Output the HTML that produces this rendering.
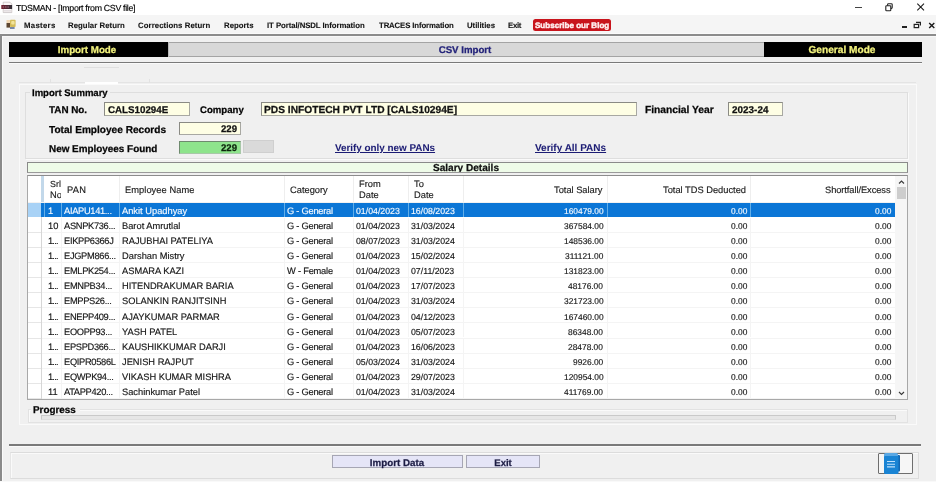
<!DOCTYPE html>
<html><head><meta charset="utf-8"><style>
html,body{margin:0;padding:0}
body{width:936px;height:482px;overflow:hidden;position:relative;background:#f0f0f0;font-family:"Liberation Sans",sans-serif}
.t{position:absolute;white-space:nowrap;line-height:1;font-family:"Liberation Sans",sans-serif;text-rendering:geometricPrecision}
.t[style*="bold"]{-webkit-text-stroke:0.25px currentColor}
.r{position:absolute}
.t{will-change:transform;-webkit-text-stroke:0.15px currentColor}
</style></head><body>
<div class="r" style="left:0px;top:0px;width:936.00px;height:15.00px;background:#ffffff"></div>
<div class="r" style="left:0px;top:15px;width:936.00px;height:18.00px;background:#f5f5f5"></div>
<div class="r" style="left:0px;top:33px;width:936.00px;height:1.00px;background:#fafafa"></div>
<div class="r" style="left:0px;top:34px;width:936.00px;height:2.00px;background:#8c8c8c"></div>
<div class="r" style="left:0px;top:36px;width:936.00px;height:1.00px;background:#f8f8f8"></div>
<div class="r" style="left:0px;top:36px;width:2.00px;height:446.00px;background:#8a8a8a"></div>
<div class="r" style="left:2px;top:36px;width:1.00px;height:446.00px;background:#fafafa"></div>
<svg class="r" style="left:0px;top:0px" width="15" height="15" viewBox="0 0 15 15"><defs><linearGradient id="ig" x1="0" x2="1" y1="0" y2="0"><stop offset="0" stop-color="#742030"/><stop offset="1" stop-color="#303038"/></linearGradient></defs><path d="M3.2 2.2 H10 L11.8 4 V12.6 H3.2 Z" fill="#fbf8f8" stroke="#b8b0b0" stroke-width="0.6"/><rect x="1.3" y="5" width="10.8" height="4" fill="url(#ig)"/><path d="M2.6 7 H4.2 M5 7 H6.6 M7.4 7 H9" stroke="#b88898" stroke-width="0.8"/><path d="M3.8 10.6 H11 M3.8 12 H11" stroke="#cfc8cc" stroke-width="0.6"/></svg>
<div class="t" style="left:16.00px;top:4.0px;font-size:8.8px;color:#000;letter-spacing:-0.319px;">TDSMAN - [Import from CSV file]</div>
<div class="r" style="left:855px;top:7px;width:7.00px;height:1.00px;background:#444"></div>
<svg class="r" style="left:884px;top:2px" width="10" height="10" viewBox="0 0 10 10"><rect x="1.8" y="3.8" width="5" height="5" rx="0.8" fill="none" stroke="#222" stroke-width="1.1"/><path d="M3.6 3.8 V2.6 Q3.6 1.8 4.4 1.8 H7.4 Q8.2 1.8 8.2 2.6 V5.6 Q8.2 6.4 7.4 6.4 H6.8" fill="none" stroke="#222" stroke-width="1.1"/></svg>
<svg class="r" style="left:916px;top:2px" width="10" height="10" viewBox="0 0 10 10"><path d="M1.3 1.6 L8 8.3 M8 1.6 L1.3 8.3" stroke="#1a1a1a" stroke-width="1.05"/></svg>
<svg class="r" style="left:6px;top:19px" width="11" height="11" viewBox="0 0 11 11"><rect x="0.5" y="1" width="3.6" height="3" fill="#f2d8b4"/><rect x="0.5" y="4" width="3.6" height="4.6" fill="#5e4630"/><rect x="4" y="0.7" width="5.6" height="7.3" rx="0.8" fill="#d4bc5a"/><rect x="5.2" y="2" width="3.4" height="3.6" rx="1" fill="#f2e49a"/><rect x="4" y="8" width="4.6" height="2" fill="#7888a8"/></svg>
<div class="t" style="left:24.00px;top:22.0px;font-size:7.8px;font-weight:bold;color:#141414;letter-spacing:0.303px;-webkit-text-stroke:0.1px currentColor;">Masters</div>
<div class="t" style="left:68.00px;top:22.0px;font-size:7.8px;font-weight:bold;color:#141414;letter-spacing:0.043px;-webkit-text-stroke:0.1px currentColor;">Regular Return</div>
<div class="t" style="left:138.20px;top:22.0px;font-size:7.8px;font-weight:bold;color:#141414;letter-spacing:0.066px;-webkit-text-stroke:0.1px currentColor;">Corrections Return</div>
<div class="t" style="left:223.90px;top:22.0px;font-size:7.8px;font-weight:bold;color:#141414;letter-spacing:0.005px;-webkit-text-stroke:0.1px currentColor;">Reports</div>
<div class="t" style="left:267.30px;top:22.0px;font-size:7.8px;font-weight:bold;color:#141414;letter-spacing:-0.073px;-webkit-text-stroke:0.1px currentColor;">IT Portal/NSDL Information</div>
<div class="t" style="left:378.50px;top:22.0px;font-size:7.8px;font-weight:bold;color:#141414;letter-spacing:-0.137px;-webkit-text-stroke:0.1px currentColor;">TRACES Information</div>
<div class="t" style="left:466.70px;top:22.0px;font-size:7.8px;font-weight:bold;color:#141414;letter-spacing:-0.022px;-webkit-text-stroke:0.1px currentColor;">Utilities</div>
<div class="t" style="left:508.00px;top:22.0px;font-size:7.8px;font-weight:bold;color:#141414;letter-spacing:-0.302px;-webkit-text-stroke:0.1px currentColor;">Exit</div>
<div class="r" style="left:532.8px;top:19.3px;width:78.00px;height:11.30px;background:#c8141c;border-radius:2.5px"></div>
<div class="t" style="left:535.00px;top:22.0px;font-size:8.0px;font-weight:bold;color:#fff0f0;letter-spacing:0.024px;-webkit-text-stroke:0.45px #fff0f0;">Subscribe our Blog</div>
<div class="r" style="left:901.5px;top:26.2px;width:5.00px;height:1.40px;background:#222"></div>
<svg class="r" style="left:913px;top:21px" width="9" height="8" viewBox="0 0 9 8"><rect x="1.2" y="3.4" width="4.4" height="3.2" fill="none" stroke="#222" stroke-width="1.2"/><path d="M3 1.4 H7.4 V4.6" fill="none" stroke="#222" stroke-width="1.2"/></svg>
<svg class="r" style="left:927.5px;top:21.5px" width="8" height="7" viewBox="0 0 8 7"><path d="M1.2 1 L6.3 6 M6.3 1 L1.2 6" stroke="#1a1a1a" stroke-width="1.4"/></svg>
<div class="r" style="left:168px;top:42px;width:596.00px;height:15.00px;background:#d8d8d8;border-top:1px solid #a4a4a4;border-bottom:1px solid #a4a4a4;box-sizing:border-box"></div>
<div class="r" style="left:168px;top:42px;width:1.00px;height:15.00px;background:#b8b8b8"></div>
<div class="r" style="left:9px;top:42px;width:159.00px;height:15.00px;background:#000"></div>
<div class="r" style="left:763.5px;top:42px;width:158.50px;height:15.00px;background:#000"></div>
<div class="t" style="left:-212.55px;width:600px;text-align:center;top:46.0px;font-size:9.75px;font-weight:bold;color:#f2f27c;letter-spacing:0.000px;">Import Mode</div>
<div class="t" style="left:165.00px;width:600px;text-align:center;top:46.0px;font-size:9.7px;font-weight:bold;color:#24247a;letter-spacing:-0.013px;">CSV Import</div>
<div class="t" style="left:542.20px;width:600px;text-align:center;top:46.0px;font-size:10.1px;font-weight:bold;color:#f2f27c;letter-spacing:0.019px;">General Mode</div>
<div class="r" style="left:9px;top:61.5px;width:913.00px;height:1.50px;background:#7a7a7a"></div>
<div class="r" style="left:9px;top:63px;width:913.00px;height:1.00px;background:#fafafa"></div>
<div class="r" style="left:84px;top:67px;width:35.00px;height:1.00px;background:#e0e0e0"></div>
<div class="r" style="left:19px;top:82px;width:897.00px;height:1.00px;background:#e4e4e4"></div>
<div class="r" style="left:85px;top:82px;width:33.00px;height:1.50px;background:#ffffff"></div>
<div class="r" style="left:50px;top:79px;width:1.00px;height:4.00px;background:#e2e2e2"></div>
<div class="r" style="left:149px;top:79px;width:1.00px;height:4.00px;background:#e2e2e2"></div>
<div class="r" style="left:19px;top:83.5px;width:897.50px;height:341.50px;border:1px solid #fafafa;box-sizing:border-box"></div>
<div class="r" style="left:25px;top:92px;width:883.00px;height:66.50px;border:1px solid #dedede;box-shadow:1px 1px 0 #fafafa;box-sizing:border-box"></div>
<div class="r" style="left:30px;top:86px;width:80.00px;height:13.00px;background:#f0f0f0"></div>
<div class="t" style="left:32.00px;top:89.0px;font-size:9.55px;font-weight:bold;color:#050505;letter-spacing:-0.014px;">Import Summary</div>
<div class="t" style="left:49.40px;top:106.0px;font-size:9.85px;font-weight:bold;color:#050505;letter-spacing:-0.003px;">TAN No.</div>
<div class="r" style="left:104px;top:102px;width:86.00px;height:14.00px;background:#fefee4;border:1px solid #8a8a84;border-right-color:#a8a8a2;border-bottom-color:#a8a8a2;box-sizing:border-box"></div>
<div class="t" style="left:107.70px;top:106.0px;font-size:9.75px;font-weight:bold;color:#111;letter-spacing:0.005px;">CALS10294E</div>
<div class="t" style="left:200.00px;top:106.0px;font-size:9.6px;font-weight:bold;color:#050505;letter-spacing:0.010px;">Company</div>
<div class="r" style="left:261px;top:102px;width:376.00px;height:14.00px;background:#fefee4;border:1px solid #8a8a84;border-right-color:#a8a8a2;border-bottom-color:#a8a8a2;box-sizing:border-box"></div>
<div class="t" style="left:264.00px;top:106.0px;font-size:10.2px;font-weight:bold;color:#111;letter-spacing:0.007px;">PDS INFOTECH PVT LTD [CALS10294E]</div>
<div class="t" style="left:645.10px;top:106.0px;font-size:10.25px;font-weight:bold;color:#050505;letter-spacing:-0.004px;">Financial Year</div>
<div class="r" style="left:728.4px;top:102.4px;width:54.80px;height:13.40px;background:#fefee4;border:1px solid #8a8a84;border-right-color:#a8a8a2;border-bottom-color:#a8a8a2;box-sizing:border-box"></div>
<div class="t" style="left:731.50px;top:106.0px;font-size:9.85px;font-weight:bold;color:#111;letter-spacing:0.042px;">2023-24</div>
<div class="t" style="left:49.40px;top:126.0px;font-size:10.1px;font-weight:bold;color:#050505;letter-spacing:-0.001px;">Total Employee Records</div>
<div class="r" style="left:178.5px;top:122.3px;width:62.30px;height:12.70px;background:#fefee4;border:1px solid #8a8a84;border-right-color:#a8a8a2;border-bottom-color:#a8a8a2;box-sizing:border-box"></div>
<div class="t" style="right:699.00px;top:125.0px;font-size:9.6px;font-weight:bold;color:#111;">229</div>
<div class="t" style="left:48.70px;top:145.0px;font-size:9.9px;font-weight:bold;color:#050505;letter-spacing:0.013px;">New Employees Found</div>
<div class="r" style="left:178.5px;top:140.6px;width:62.30px;height:13.20px;background:#8ee48c;border:1px solid #6e8a6e;border-right-color:#a8c8a8;border-bottom-color:#a8c8a8;box-sizing:border-box"></div>
<div class="t" style="right:699.00px;top:144.0px;font-size:9.6px;font-weight:bold;color:#0c240c;">229</div>
<div class="r" style="left:243.3px;top:140.4px;width:30.50px;height:12.40px;background:#dadada;border:1px solid #cfcfcf;box-sizing:border-box"></div>
<div class="t" style="left:334.60px;top:144.0px;font-size:9.9px;font-weight:bold;color:#1c1c74;letter-spacing:-0.010px;text-decoration:underline;-webkit-text-stroke:0.05px currentColor;">Verify only new PANs</div>
<div class="t" style="left:535.40px;top:144.0px;font-size:10.0px;font-weight:bold;color:#1c1c74;letter-spacing:-0.003px;text-decoration:underline;-webkit-text-stroke:0.05px currentColor;">Verify All PANs</div>
<div class="r" style="left:27px;top:162px;width:881.00px;height:11.00px;background:#eefbe8;border:1px solid #8a8a8a;border-bottom-color:#9a9a9a;box-sizing:border-box"></div>
<div class="r" style="left:28px;top:163px;width:879px;height:9px;overflow:hidden"><div class="t" style="left:138.00px;width:600px;text-align:center;top:1.0px;font-size:10.05px;font-weight:bold;color:#111;letter-spacing:0.006px;">Salary Details</div></div>
<div class="r" style="left:27px;top:174.6px;width:881.00px;height:225.40px;background:#fff;border:1px solid #a8a8a8;border-top:1.5px solid #8c8c8c;box-sizing:border-box"></div>
<div class="r" style="left:41px;top:176px;width:3.30px;height:27.00px;background:#c2d8ea"></div>
<div class="r" style="left:118.8px;top:176px;width:1.00px;height:26.00px;background:#eeeeee"></div>
<div class="r" style="left:283.9px;top:176px;width:1.00px;height:26.00px;background:#eeeeee"></div>
<div class="r" style="left:352.8px;top:176px;width:1.00px;height:26.00px;background:#eeeeee"></div>
<div class="r" style="left:408.0px;top:176px;width:1.00px;height:26.00px;background:#eeeeee"></div>
<div class="r" style="left:462.9px;top:176px;width:1.00px;height:26.00px;background:#eeeeee"></div>
<div class="r" style="left:606.9px;top:176px;width:1.00px;height:26.00px;background:#eeeeee"></div>
<div class="r" style="left:749.8px;top:176px;width:1.00px;height:26.00px;background:#eeeeee"></div>
<div class="r" style="left:28px;top:202px;width:867.00px;height:1.00px;background:#f2f2f2"></div>
<div class="r" style="left:49.6px;top:176px;width:11px;height:26px;overflow:hidden"><div class="t" style="left:0.00px;top:4.0px;font-size:8.9px;color:#202020;">Srl</div><div class="t" style="left:0.00px;top:15.0px;font-size:9.3px;color:#202020;">No</div></div>
<div class="t" style="left:66.70px;top:186.0px;font-size:9.3px;color:#202020;letter-spacing:0.284px;">PAN</div>
<div class="t" style="left:125.00px;top:186.0px;font-size:9.3px;color:#202020;letter-spacing:0.054px;">Employee Name</div>
<div class="t" style="left:289.90px;top:186.0px;font-size:9.3px;color:#202020;">Category</div>
<div class="t" style="left:358.70px;top:180.0px;font-size:9.3px;color:#202020;">From</div>
<div class="t" style="left:358.70px;top:191.0px;font-size:9.3px;color:#202020;">Date</div>
<div class="t" style="left:413.60px;top:180.0px;font-size:9.3px;color:#202020;">To</div>
<div class="t" style="left:413.60px;top:191.0px;font-size:9.3px;color:#202020;">Date</div>
<div class="t" style="right:333.61px;top:186.0px;font-size:9.3px;color:#202020;letter-spacing:-0.008px;">Total Salary</div>
<div class="t" style="right:189.80px;top:186.0px;font-size:9.3px;color:#202020;">Total TDS Deducted</div>
<div class="t" style="right:45.77px;top:186.0px;font-size:9.3px;color:#202020;letter-spacing:-0.072px;">Shortfall/Excess</div>
<div class="r" style="left:28px;top:202.6px;width:13.00px;height:14.60px;background:#a8d2f6"></div>
<div class="r" style="left:41px;top:202.6px;width:854.00px;height:14.60px;background:#0b76d6"></div>
<div class="r" style="left:44.2px;top:202.6px;width:1.00px;height:14.60px;background:#62aee8"></div>
<div class="r" style="left:60.8px;top:202.6px;width:1.00px;height:14.60px;background:#62aee8"></div>
<div class="r" style="left:118.8px;top:202.6px;width:1.00px;height:14.60px;background:#62aee8"></div>
<div class="r" style="left:283.9px;top:202.6px;width:1.00px;height:14.60px;background:#62aee8"></div>
<div class="r" style="left:352.8px;top:202.6px;width:1.00px;height:14.60px;background:#62aee8"></div>
<div class="r" style="left:408.0px;top:202.6px;width:1.00px;height:14.60px;background:#62aee8"></div>
<div class="r" style="left:462.9px;top:202.6px;width:1.00px;height:14.60px;background:#62aee8"></div>
<div class="r" style="left:606.9px;top:202.6px;width:1.00px;height:14.60px;background:#62aee8"></div>
<div class="r" style="left:749.8px;top:202.6px;width:1.00px;height:14.60px;background:#62aee8"></div>
<div class="t" style="left:47.80px;top:207.0px;font-size:9.3px;color:#f4f9ff;">1</div>
<div class="t" style="left:64.10px;top:207.0px;font-size:9.3px;color:#f4f9ff;letter-spacing:-0.32px;">AIAPU141...</div>
<div class="t" style="left:121.60px;top:207.0px;font-size:9.3px;color:#f4f9ff;">Ankit Upadhyay</div>
<div class="t" style="left:287.40px;top:207.0px;font-size:9.3px;color:#f4f9ff;letter-spacing:-0.248px;">G - General</div>
<div class="t" style="left:355.50px;top:207.0px;font-size:8.75px;color:#f4f9ff;">01/04/2023</div>
<div class="t" style="left:411.00px;top:207.0px;font-size:8.75px;color:#f4f9ff;">16/08/2023</div>
<div class="t" style="right:332.80px;top:207.0px;font-size:8.4px;color:#f4f9ff;">160479.00</div>
<div class="t" style="right:189.20px;top:207.0px;font-size:8.4px;color:#f4f9ff;">0.00</div>
<div class="t" style="right:44.70px;top:207.0px;font-size:8.4px;color:#f4f9ff;">0.00</div>
<div class="r" style="left:60.8px;top:217.7px;width:1.00px;height:14.10px;background:#f4f4f4"></div>
<div class="r" style="left:118.8px;top:217.7px;width:1.00px;height:14.10px;background:#f4f4f4"></div>
<div class="r" style="left:283.9px;top:217.7px;width:1.00px;height:14.10px;background:#f4f4f4"></div>
<div class="r" style="left:352.8px;top:217.7px;width:1.00px;height:14.10px;background:#f4f4f4"></div>
<div class="r" style="left:408.0px;top:217.7px;width:1.00px;height:14.10px;background:#f4f4f4"></div>
<div class="r" style="left:462.9px;top:217.7px;width:1.00px;height:14.10px;background:#f4f4f4"></div>
<div class="r" style="left:606.9px;top:217.7px;width:1.00px;height:14.10px;background:#f4f4f4"></div>
<div class="r" style="left:749.8px;top:217.7px;width:1.00px;height:14.10px;background:#f4f4f4"></div>
<div class="r" style="left:41px;top:231.79999999999998px;width:854.00px;height:1.00px;background:#f4f4f4"></div>
<div class="r" style="left:28px;top:231.79999999999998px;width:13.00px;height:1.00px;background:#e6e6e6"></div>
<div class="t" style="left:47.80px;top:222.0px;font-size:9.3px;color:#161616;">10</div>
<div class="t" style="left:64.10px;top:222.0px;font-size:9.3px;color:#161616;letter-spacing:-0.32px;">ASNPK736...</div>
<div class="t" style="left:121.60px;top:222.0px;font-size:9.3px;color:#161616;">Barot Amrutlal</div>
<div class="t" style="left:287.40px;top:222.0px;font-size:9.3px;color:#161616;letter-spacing:-0.248px;">G - General</div>
<div class="t" style="left:355.50px;top:222.0px;font-size:8.75px;color:#161616;">01/04/2023</div>
<div class="t" style="left:411.00px;top:222.0px;font-size:8.75px;color:#161616;">31/03/2024</div>
<div class="t" style="right:332.80px;top:222.0px;font-size:8.4px;color:#161616;">367584.00</div>
<div class="t" style="right:189.20px;top:222.0px;font-size:8.4px;color:#161616;">0.00</div>
<div class="t" style="right:44.70px;top:222.0px;font-size:8.4px;color:#161616;">0.00</div>
<div class="r" style="left:60.8px;top:232.79999999999998px;width:1.00px;height:14.10px;background:#f4f4f4"></div>
<div class="r" style="left:118.8px;top:232.79999999999998px;width:1.00px;height:14.10px;background:#f4f4f4"></div>
<div class="r" style="left:283.9px;top:232.79999999999998px;width:1.00px;height:14.10px;background:#f4f4f4"></div>
<div class="r" style="left:352.8px;top:232.79999999999998px;width:1.00px;height:14.10px;background:#f4f4f4"></div>
<div class="r" style="left:408.0px;top:232.79999999999998px;width:1.00px;height:14.10px;background:#f4f4f4"></div>
<div class="r" style="left:462.9px;top:232.79999999999998px;width:1.00px;height:14.10px;background:#f4f4f4"></div>
<div class="r" style="left:606.9px;top:232.79999999999998px;width:1.00px;height:14.10px;background:#f4f4f4"></div>
<div class="r" style="left:749.8px;top:232.79999999999998px;width:1.00px;height:14.10px;background:#f4f4f4"></div>
<div class="r" style="left:41px;top:246.89999999999998px;width:854.00px;height:1.00px;background:#f4f4f4"></div>
<div class="r" style="left:28px;top:246.89999999999998px;width:13.00px;height:1.00px;background:#e6e6e6"></div>
<div class="t" style="left:47.80px;top:237.0px;font-size:9.3px;color:#161616;letter-spacing:-0.808px;">1...</div>
<div class="t" style="left:64.10px;top:237.0px;font-size:9.3px;color:#161616;letter-spacing:-0.32px;">EIKPP6366J</div>
<div class="t" style="left:121.60px;top:237.0px;font-size:9.3px;color:#161616;">RAJUBHAI PATELIYA</div>
<div class="t" style="left:287.40px;top:237.0px;font-size:9.3px;color:#161616;letter-spacing:-0.248px;">G - General</div>
<div class="t" style="left:355.50px;top:237.0px;font-size:8.75px;color:#161616;">08/07/2023</div>
<div class="t" style="left:411.00px;top:237.0px;font-size:8.75px;color:#161616;">31/03/2024</div>
<div class="t" style="right:332.80px;top:237.0px;font-size:8.4px;color:#161616;">148536.00</div>
<div class="t" style="right:189.20px;top:237.0px;font-size:8.4px;color:#161616;">0.00</div>
<div class="t" style="right:44.70px;top:237.0px;font-size:8.4px;color:#161616;">0.00</div>
<div class="r" style="left:60.8px;top:247.89999999999998px;width:1.00px;height:14.10px;background:#f4f4f4"></div>
<div class="r" style="left:118.8px;top:247.89999999999998px;width:1.00px;height:14.10px;background:#f4f4f4"></div>
<div class="r" style="left:283.9px;top:247.89999999999998px;width:1.00px;height:14.10px;background:#f4f4f4"></div>
<div class="r" style="left:352.8px;top:247.89999999999998px;width:1.00px;height:14.10px;background:#f4f4f4"></div>
<div class="r" style="left:408.0px;top:247.89999999999998px;width:1.00px;height:14.10px;background:#f4f4f4"></div>
<div class="r" style="left:462.9px;top:247.89999999999998px;width:1.00px;height:14.10px;background:#f4f4f4"></div>
<div class="r" style="left:606.9px;top:247.89999999999998px;width:1.00px;height:14.10px;background:#f4f4f4"></div>
<div class="r" style="left:749.8px;top:247.89999999999998px;width:1.00px;height:14.10px;background:#f4f4f4"></div>
<div class="r" style="left:41px;top:262.0px;width:854.00px;height:1.00px;background:#f4f4f4"></div>
<div class="r" style="left:28px;top:262.0px;width:13.00px;height:1.00px;background:#e6e6e6"></div>
<div class="t" style="left:47.80px;top:252.0px;font-size:9.3px;color:#161616;letter-spacing:-0.808px;">1...</div>
<div class="t" style="left:64.10px;top:252.0px;font-size:9.3px;color:#161616;letter-spacing:-0.32px;">EJGPM866...</div>
<div class="t" style="left:121.60px;top:252.0px;font-size:9.3px;color:#161616;">Darshan Mistry</div>
<div class="t" style="left:287.40px;top:252.0px;font-size:9.3px;color:#161616;letter-spacing:-0.248px;">G - General</div>
<div class="t" style="left:355.50px;top:252.0px;font-size:8.75px;color:#161616;">01/04/2023</div>
<div class="t" style="left:411.00px;top:252.0px;font-size:8.75px;color:#161616;">15/02/2024</div>
<div class="t" style="right:332.80px;top:252.0px;font-size:8.4px;color:#161616;">311121.00</div>
<div class="t" style="right:189.20px;top:252.0px;font-size:8.4px;color:#161616;">0.00</div>
<div class="t" style="right:44.70px;top:252.0px;font-size:8.4px;color:#161616;">0.00</div>
<div class="r" style="left:60.8px;top:263.0px;width:1.00px;height:14.10px;background:#f4f4f4"></div>
<div class="r" style="left:118.8px;top:263.0px;width:1.00px;height:14.10px;background:#f4f4f4"></div>
<div class="r" style="left:283.9px;top:263.0px;width:1.00px;height:14.10px;background:#f4f4f4"></div>
<div class="r" style="left:352.8px;top:263.0px;width:1.00px;height:14.10px;background:#f4f4f4"></div>
<div class="r" style="left:408.0px;top:263.0px;width:1.00px;height:14.10px;background:#f4f4f4"></div>
<div class="r" style="left:462.9px;top:263.0px;width:1.00px;height:14.10px;background:#f4f4f4"></div>
<div class="r" style="left:606.9px;top:263.0px;width:1.00px;height:14.10px;background:#f4f4f4"></div>
<div class="r" style="left:749.8px;top:263.0px;width:1.00px;height:14.10px;background:#f4f4f4"></div>
<div class="r" style="left:41px;top:277.1px;width:854.00px;height:1.00px;background:#f4f4f4"></div>
<div class="r" style="left:28px;top:277.1px;width:13.00px;height:1.00px;background:#e6e6e6"></div>
<div class="t" style="left:47.80px;top:267.0px;font-size:9.3px;color:#161616;letter-spacing:-0.808px;">1...</div>
<div class="t" style="left:64.10px;top:267.0px;font-size:9.3px;color:#161616;letter-spacing:-0.32px;">EMLPK254...</div>
<div class="t" style="left:121.60px;top:267.0px;font-size:9.3px;color:#161616;">ASMARA KAZI</div>
<div class="t" style="left:287.40px;top:267.0px;font-size:9.3px;color:#161616;letter-spacing:-0.217px;">W - Female</div>
<div class="t" style="left:355.50px;top:267.0px;font-size:8.75px;color:#161616;">01/04/2023</div>
<div class="t" style="left:411.00px;top:267.0px;font-size:8.75px;color:#161616;">07/11/2023</div>
<div class="t" style="right:332.80px;top:267.0px;font-size:8.4px;color:#161616;">131823.00</div>
<div class="t" style="right:189.20px;top:267.0px;font-size:8.4px;color:#161616;">0.00</div>
<div class="t" style="right:44.70px;top:267.0px;font-size:8.4px;color:#161616;">0.00</div>
<div class="r" style="left:60.8px;top:278.1px;width:1.00px;height:14.10px;background:#f4f4f4"></div>
<div class="r" style="left:118.8px;top:278.1px;width:1.00px;height:14.10px;background:#f4f4f4"></div>
<div class="r" style="left:283.9px;top:278.1px;width:1.00px;height:14.10px;background:#f4f4f4"></div>
<div class="r" style="left:352.8px;top:278.1px;width:1.00px;height:14.10px;background:#f4f4f4"></div>
<div class="r" style="left:408.0px;top:278.1px;width:1.00px;height:14.10px;background:#f4f4f4"></div>
<div class="r" style="left:462.9px;top:278.1px;width:1.00px;height:14.10px;background:#f4f4f4"></div>
<div class="r" style="left:606.9px;top:278.1px;width:1.00px;height:14.10px;background:#f4f4f4"></div>
<div class="r" style="left:749.8px;top:278.1px;width:1.00px;height:14.10px;background:#f4f4f4"></div>
<div class="r" style="left:41px;top:292.20000000000005px;width:854.00px;height:1.00px;background:#f4f4f4"></div>
<div class="r" style="left:28px;top:292.20000000000005px;width:13.00px;height:1.00px;background:#e6e6e6"></div>
<div class="t" style="left:47.80px;top:282.0px;font-size:9.3px;color:#161616;letter-spacing:-0.808px;">1...</div>
<div class="t" style="left:64.10px;top:282.0px;font-size:9.3px;color:#161616;letter-spacing:-0.32px;">EMNPB34...</div>
<div class="t" style="left:121.60px;top:282.0px;font-size:9.3px;color:#161616;">HITENDRAKUMAR BARIA</div>
<div class="t" style="left:287.40px;top:282.0px;font-size:9.3px;color:#161616;letter-spacing:-0.248px;">G - General</div>
<div class="t" style="left:355.50px;top:282.0px;font-size:8.75px;color:#161616;">01/04/2023</div>
<div class="t" style="left:411.00px;top:282.0px;font-size:8.75px;color:#161616;">17/07/2023</div>
<div class="t" style="right:332.80px;top:282.0px;font-size:8.4px;color:#161616;">48176.00</div>
<div class="t" style="right:189.20px;top:282.0px;font-size:8.4px;color:#161616;">0.00</div>
<div class="t" style="right:44.70px;top:282.0px;font-size:8.4px;color:#161616;">0.00</div>
<div class="r" style="left:60.8px;top:293.2px;width:1.00px;height:14.10px;background:#f4f4f4"></div>
<div class="r" style="left:118.8px;top:293.2px;width:1.00px;height:14.10px;background:#f4f4f4"></div>
<div class="r" style="left:283.9px;top:293.2px;width:1.00px;height:14.10px;background:#f4f4f4"></div>
<div class="r" style="left:352.8px;top:293.2px;width:1.00px;height:14.10px;background:#f4f4f4"></div>
<div class="r" style="left:408.0px;top:293.2px;width:1.00px;height:14.10px;background:#f4f4f4"></div>
<div class="r" style="left:462.9px;top:293.2px;width:1.00px;height:14.10px;background:#f4f4f4"></div>
<div class="r" style="left:606.9px;top:293.2px;width:1.00px;height:14.10px;background:#f4f4f4"></div>
<div class="r" style="left:749.8px;top:293.2px;width:1.00px;height:14.10px;background:#f4f4f4"></div>
<div class="r" style="left:41px;top:307.3px;width:854.00px;height:1.00px;background:#f4f4f4"></div>
<div class="r" style="left:28px;top:307.3px;width:13.00px;height:1.00px;background:#e6e6e6"></div>
<div class="t" style="left:47.80px;top:297.0px;font-size:9.3px;color:#161616;letter-spacing:-0.808px;">1...</div>
<div class="t" style="left:64.10px;top:297.0px;font-size:9.3px;color:#161616;letter-spacing:-0.32px;">EMPPS26...</div>
<div class="t" style="left:121.60px;top:297.0px;font-size:9.3px;color:#161616;">SOLANKIN RANJITSINH</div>
<div class="t" style="left:287.40px;top:297.0px;font-size:9.3px;color:#161616;letter-spacing:-0.248px;">G - General</div>
<div class="t" style="left:355.50px;top:297.0px;font-size:8.75px;color:#161616;">01/04/2023</div>
<div class="t" style="left:411.00px;top:297.0px;font-size:8.75px;color:#161616;">31/03/2024</div>
<div class="t" style="right:332.80px;top:297.0px;font-size:8.4px;color:#161616;">321723.00</div>
<div class="t" style="right:189.20px;top:297.0px;font-size:8.4px;color:#161616;">0.00</div>
<div class="t" style="right:44.70px;top:297.0px;font-size:8.4px;color:#161616;">0.00</div>
<div class="r" style="left:60.8px;top:308.3px;width:1.00px;height:14.10px;background:#f4f4f4"></div>
<div class="r" style="left:118.8px;top:308.3px;width:1.00px;height:14.10px;background:#f4f4f4"></div>
<div class="r" style="left:283.9px;top:308.3px;width:1.00px;height:14.10px;background:#f4f4f4"></div>
<div class="r" style="left:352.8px;top:308.3px;width:1.00px;height:14.10px;background:#f4f4f4"></div>
<div class="r" style="left:408.0px;top:308.3px;width:1.00px;height:14.10px;background:#f4f4f4"></div>
<div class="r" style="left:462.9px;top:308.3px;width:1.00px;height:14.10px;background:#f4f4f4"></div>
<div class="r" style="left:606.9px;top:308.3px;width:1.00px;height:14.10px;background:#f4f4f4"></div>
<div class="r" style="left:749.8px;top:308.3px;width:1.00px;height:14.10px;background:#f4f4f4"></div>
<div class="r" style="left:41px;top:322.40000000000003px;width:854.00px;height:1.00px;background:#f4f4f4"></div>
<div class="r" style="left:28px;top:322.40000000000003px;width:13.00px;height:1.00px;background:#e6e6e6"></div>
<div class="t" style="left:47.80px;top:313.0px;font-size:9.3px;color:#161616;letter-spacing:-0.808px;">1...</div>
<div class="t" style="left:64.10px;top:313.0px;font-size:9.3px;color:#161616;letter-spacing:-0.32px;">ENEPP409...</div>
<div class="t" style="left:121.60px;top:313.0px;font-size:9.3px;color:#161616;">AJAYKUMAR PARMAR</div>
<div class="t" style="left:287.40px;top:313.0px;font-size:9.3px;color:#161616;letter-spacing:-0.248px;">G - General</div>
<div class="t" style="left:355.50px;top:313.0px;font-size:8.75px;color:#161616;">01/04/2023</div>
<div class="t" style="left:411.00px;top:313.0px;font-size:8.75px;color:#161616;">04/12/2023</div>
<div class="t" style="right:332.80px;top:313.0px;font-size:8.4px;color:#161616;">167460.00</div>
<div class="t" style="right:189.20px;top:313.0px;font-size:8.4px;color:#161616;">0.00</div>
<div class="t" style="right:44.70px;top:313.0px;font-size:8.4px;color:#161616;">0.00</div>
<div class="r" style="left:60.8px;top:323.4px;width:1.00px;height:14.10px;background:#f4f4f4"></div>
<div class="r" style="left:118.8px;top:323.4px;width:1.00px;height:14.10px;background:#f4f4f4"></div>
<div class="r" style="left:283.9px;top:323.4px;width:1.00px;height:14.10px;background:#f4f4f4"></div>
<div class="r" style="left:352.8px;top:323.4px;width:1.00px;height:14.10px;background:#f4f4f4"></div>
<div class="r" style="left:408.0px;top:323.4px;width:1.00px;height:14.10px;background:#f4f4f4"></div>
<div class="r" style="left:462.9px;top:323.4px;width:1.00px;height:14.10px;background:#f4f4f4"></div>
<div class="r" style="left:606.9px;top:323.4px;width:1.00px;height:14.10px;background:#f4f4f4"></div>
<div class="r" style="left:749.8px;top:323.4px;width:1.00px;height:14.10px;background:#f4f4f4"></div>
<div class="r" style="left:41px;top:337.5px;width:854.00px;height:1.00px;background:#f4f4f4"></div>
<div class="r" style="left:28px;top:337.5px;width:13.00px;height:1.00px;background:#e6e6e6"></div>
<div class="t" style="left:47.80px;top:328.0px;font-size:9.3px;color:#161616;letter-spacing:-0.808px;">1...</div>
<div class="t" style="left:64.10px;top:328.0px;font-size:9.3px;color:#161616;letter-spacing:-0.32px;">EOOPP93...</div>
<div class="t" style="left:121.60px;top:328.0px;font-size:9.3px;color:#161616;">YASH PATEL</div>
<div class="t" style="left:287.40px;top:328.0px;font-size:9.3px;color:#161616;letter-spacing:-0.248px;">G - General</div>
<div class="t" style="left:355.50px;top:328.0px;font-size:8.75px;color:#161616;">01/04/2023</div>
<div class="t" style="left:411.00px;top:328.0px;font-size:8.75px;color:#161616;">05/07/2023</div>
<div class="t" style="right:332.80px;top:328.0px;font-size:8.4px;color:#161616;">86348.00</div>
<div class="t" style="right:189.20px;top:328.0px;font-size:8.4px;color:#161616;">0.00</div>
<div class="t" style="right:44.70px;top:328.0px;font-size:8.4px;color:#161616;">0.00</div>
<div class="r" style="left:60.8px;top:338.5px;width:1.00px;height:14.10px;background:#f4f4f4"></div>
<div class="r" style="left:118.8px;top:338.5px;width:1.00px;height:14.10px;background:#f4f4f4"></div>
<div class="r" style="left:283.9px;top:338.5px;width:1.00px;height:14.10px;background:#f4f4f4"></div>
<div class="r" style="left:352.8px;top:338.5px;width:1.00px;height:14.10px;background:#f4f4f4"></div>
<div class="r" style="left:408.0px;top:338.5px;width:1.00px;height:14.10px;background:#f4f4f4"></div>
<div class="r" style="left:462.9px;top:338.5px;width:1.00px;height:14.10px;background:#f4f4f4"></div>
<div class="r" style="left:606.9px;top:338.5px;width:1.00px;height:14.10px;background:#f4f4f4"></div>
<div class="r" style="left:749.8px;top:338.5px;width:1.00px;height:14.10px;background:#f4f4f4"></div>
<div class="r" style="left:41px;top:352.6px;width:854.00px;height:1.00px;background:#f4f4f4"></div>
<div class="r" style="left:28px;top:352.6px;width:13.00px;height:1.00px;background:#e6e6e6"></div>
<div class="t" style="left:47.80px;top:343.0px;font-size:9.3px;color:#161616;letter-spacing:-0.808px;">1...</div>
<div class="t" style="left:64.10px;top:343.0px;font-size:9.3px;color:#161616;letter-spacing:-0.32px;">EPSPD366...</div>
<div class="t" style="left:121.60px;top:343.0px;font-size:9.3px;color:#161616;">KAUSHIKKUMAR DARJI</div>
<div class="t" style="left:287.40px;top:343.0px;font-size:9.3px;color:#161616;letter-spacing:-0.248px;">G - General</div>
<div class="t" style="left:355.50px;top:343.0px;font-size:8.75px;color:#161616;">01/04/2023</div>
<div class="t" style="left:411.00px;top:343.0px;font-size:8.75px;color:#161616;">16/06/2023</div>
<div class="t" style="right:332.80px;top:343.0px;font-size:8.4px;color:#161616;">28478.00</div>
<div class="t" style="right:189.20px;top:343.0px;font-size:8.4px;color:#161616;">0.00</div>
<div class="t" style="right:44.70px;top:343.0px;font-size:8.4px;color:#161616;">0.00</div>
<div class="r" style="left:60.8px;top:353.6px;width:1.00px;height:14.10px;background:#f4f4f4"></div>
<div class="r" style="left:118.8px;top:353.6px;width:1.00px;height:14.10px;background:#f4f4f4"></div>
<div class="r" style="left:283.9px;top:353.6px;width:1.00px;height:14.10px;background:#f4f4f4"></div>
<div class="r" style="left:352.8px;top:353.6px;width:1.00px;height:14.10px;background:#f4f4f4"></div>
<div class="r" style="left:408.0px;top:353.6px;width:1.00px;height:14.10px;background:#f4f4f4"></div>
<div class="r" style="left:462.9px;top:353.6px;width:1.00px;height:14.10px;background:#f4f4f4"></div>
<div class="r" style="left:606.9px;top:353.6px;width:1.00px;height:14.10px;background:#f4f4f4"></div>
<div class="r" style="left:749.8px;top:353.6px;width:1.00px;height:14.10px;background:#f4f4f4"></div>
<div class="r" style="left:41px;top:367.70000000000005px;width:854.00px;height:1.00px;background:#f4f4f4"></div>
<div class="r" style="left:28px;top:367.70000000000005px;width:13.00px;height:1.00px;background:#e6e6e6"></div>
<div class="t" style="left:47.80px;top:358.0px;font-size:9.3px;color:#161616;letter-spacing:-0.808px;">1...</div>
<div class="t" style="left:64.10px;top:358.0px;font-size:9.3px;color:#161616;letter-spacing:-0.32px;">EQIPR0586L</div>
<div class="t" style="left:121.60px;top:358.0px;font-size:9.3px;color:#161616;">JENISH RAJPUT</div>
<div class="t" style="left:287.40px;top:358.0px;font-size:9.3px;color:#161616;letter-spacing:-0.248px;">G - General</div>
<div class="t" style="left:355.50px;top:358.0px;font-size:8.75px;color:#161616;">05/03/2024</div>
<div class="t" style="left:411.00px;top:358.0px;font-size:8.75px;color:#161616;">31/03/2024</div>
<div class="t" style="right:332.80px;top:358.0px;font-size:8.4px;color:#161616;">9926.00</div>
<div class="t" style="right:189.20px;top:358.0px;font-size:8.4px;color:#161616;">0.00</div>
<div class="t" style="right:44.70px;top:358.0px;font-size:8.4px;color:#161616;">0.00</div>
<div class="r" style="left:60.8px;top:368.7px;width:1.00px;height:14.10px;background:#f4f4f4"></div>
<div class="r" style="left:118.8px;top:368.7px;width:1.00px;height:14.10px;background:#f4f4f4"></div>
<div class="r" style="left:283.9px;top:368.7px;width:1.00px;height:14.10px;background:#f4f4f4"></div>
<div class="r" style="left:352.8px;top:368.7px;width:1.00px;height:14.10px;background:#f4f4f4"></div>
<div class="r" style="left:408.0px;top:368.7px;width:1.00px;height:14.10px;background:#f4f4f4"></div>
<div class="r" style="left:462.9px;top:368.7px;width:1.00px;height:14.10px;background:#f4f4f4"></div>
<div class="r" style="left:606.9px;top:368.7px;width:1.00px;height:14.10px;background:#f4f4f4"></div>
<div class="r" style="left:749.8px;top:368.7px;width:1.00px;height:14.10px;background:#f4f4f4"></div>
<div class="r" style="left:41px;top:382.8px;width:854.00px;height:1.00px;background:#f4f4f4"></div>
<div class="r" style="left:28px;top:382.8px;width:13.00px;height:1.00px;background:#e6e6e6"></div>
<div class="t" style="left:47.80px;top:373.0px;font-size:9.3px;color:#161616;letter-spacing:-0.808px;">1...</div>
<div class="t" style="left:64.10px;top:373.0px;font-size:9.3px;color:#161616;letter-spacing:-0.32px;">EQWPK94...</div>
<div class="t" style="left:121.60px;top:373.0px;font-size:9.3px;color:#161616;">VIKASH KUMAR MISHRA</div>
<div class="t" style="left:287.40px;top:373.0px;font-size:9.3px;color:#161616;letter-spacing:-0.248px;">G - General</div>
<div class="t" style="left:355.50px;top:373.0px;font-size:8.75px;color:#161616;">01/04/2023</div>
<div class="t" style="left:411.00px;top:373.0px;font-size:8.75px;color:#161616;">29/07/2023</div>
<div class="t" style="right:332.80px;top:373.0px;font-size:8.4px;color:#161616;">120954.00</div>
<div class="t" style="right:189.20px;top:373.0px;font-size:8.4px;color:#161616;">0.00</div>
<div class="t" style="right:44.70px;top:373.0px;font-size:8.4px;color:#161616;">0.00</div>
<div class="r" style="left:60.8px;top:383.79999999999995px;width:1.00px;height:14.10px;background:#f4f4f4"></div>
<div class="r" style="left:118.8px;top:383.79999999999995px;width:1.00px;height:14.10px;background:#f4f4f4"></div>
<div class="r" style="left:283.9px;top:383.79999999999995px;width:1.00px;height:14.10px;background:#f4f4f4"></div>
<div class="r" style="left:352.8px;top:383.79999999999995px;width:1.00px;height:14.10px;background:#f4f4f4"></div>
<div class="r" style="left:408.0px;top:383.79999999999995px;width:1.00px;height:14.10px;background:#f4f4f4"></div>
<div class="r" style="left:462.9px;top:383.79999999999995px;width:1.00px;height:14.10px;background:#f4f4f4"></div>
<div class="r" style="left:606.9px;top:383.79999999999995px;width:1.00px;height:14.10px;background:#f4f4f4"></div>
<div class="r" style="left:749.8px;top:383.79999999999995px;width:1.00px;height:14.10px;background:#f4f4f4"></div>
<div class="r" style="left:41px;top:397.9px;width:854.00px;height:1.00px;background:#f4f4f4"></div>
<div class="r" style="left:28px;top:397.9px;width:13.00px;height:1.00px;background:#e6e6e6"></div>
<div class="t" style="left:47.80px;top:388.0px;font-size:9.3px;color:#161616;">11</div>
<div class="t" style="left:64.10px;top:388.0px;font-size:9.3px;color:#161616;letter-spacing:-0.32px;">ATAPP420...</div>
<div class="t" style="left:121.60px;top:388.0px;font-size:9.3px;color:#161616;">Sachinkumar Patel</div>
<div class="t" style="left:287.40px;top:388.0px;font-size:9.3px;color:#161616;letter-spacing:-0.248px;">G - General</div>
<div class="t" style="left:355.50px;top:388.0px;font-size:8.75px;color:#161616;">01/04/2023</div>
<div class="t" style="left:411.00px;top:388.0px;font-size:8.75px;color:#161616;">31/03/2024</div>
<div class="t" style="right:332.80px;top:388.0px;font-size:8.4px;color:#161616;">411769.00</div>
<div class="t" style="right:189.20px;top:388.0px;font-size:8.4px;color:#161616;">0.00</div>
<div class="t" style="right:44.70px;top:388.0px;font-size:8.4px;color:#161616;">0.00</div>
<div class="r" style="left:41px;top:217.2px;width:1.00px;height:181.80px;background:#d6d6d6"></div>
<div class="r" style="left:895px;top:176px;width:12.00px;height:223.00px;background:#f6f6f6"></div>
<svg class="r" style="left:898px;top:179px" width="7" height="6" viewBox="0 0 7 6"><path d="M1 4.5 L3.5 2 L6 4.5" fill="none" stroke="#3a3a3a" stroke-width="1.1"/></svg>
<div class="r" style="left:896.7px;top:187.4px;width:9.20px;height:11.60px;background:#cdcdcd"></div>
<svg class="r" style="left:898px;top:390px" width="7" height="6" viewBox="0 0 7 6"><path d="M1 2 L3.5 4.5 L6 2" fill="none" stroke="#3a3a3a" stroke-width="1.1"/></svg>
<div class="r" style="left:27.5px;top:409px;width:880.50px;height:13.50px;border:1px solid #e2e2e2;box-shadow:inset 1px 1px 0 #fafafa;box-sizing:border-box"></div>
<div class="r" style="left:31px;top:403px;width:49.00px;height:10.50px;background:#f0f0f0"></div>
<div class="t" style="left:33.40px;top:406.0px;font-size:9.85px;font-weight:bold;color:#050505;letter-spacing:-0.001px;">Progress</div>
<div class="r" style="left:41px;top:414.5px;width:855.00px;height:5.30px;background:#e6e6e6;border:1px solid #c9c9c9;border-bottom-color:#dedede;box-sizing:border-box"></div>
<div class="r" style="left:9px;top:444px;width:912.00px;height:2.00px;background:#7a7a7a"></div>
<div class="r" style="left:9px;top:446px;width:912.00px;height:1.00px;background:#fafafa"></div>
<div class="r" style="left:9.5px;top:451.5px;width:909.50px;height:27.00px;border:1px solid #dcdcdc;border-left-color:#e6e6e6;box-shadow:inset 1px 1px 0 #fafafa;box-sizing:border-box"></div>
<div class="r" style="left:0px;top:481px;width:936.00px;height:1.00px;background:#f9f9f9"></div>
<div class="r" style="left:331.5px;top:455.2px;width:131.50px;height:13.30px;background:#e5e5f7;border:1px solid #a6a6b4;box-sizing:border-box"></div>
<div class="t" style="left:97.00px;width:600px;text-align:center;top:459.0px;font-size:9.75px;font-weight:bold;color:#1c1c44;letter-spacing:0.013px;">Import Data</div>
<div class="r" style="left:466px;top:455.2px;width:74.00px;height:13.30px;background:#e5e5f7;border:1px solid #a6a6b4;box-sizing:border-box"></div>
<div class="t" style="left:203.10px;width:600px;text-align:center;top:459.0px;font-size:9.5px;font-weight:bold;color:#1c1c44;letter-spacing:-0.008px;">Exit</div>
<div class="r" style="left:878.3px;top:453px;width:34.90px;height:20.80px;background:#f6f6f6;border:1px solid #6e6e6e;border-radius:1px;box-sizing:border-box"></div>
<svg class="r" style="left:883px;top:452px" width="19" height="23" viewBox="0 0 19 23"><rect x="12.5" y="3" width="4.5" height="16.5" rx="1" fill="#1268b4"/><path d="M2.5 3 H14 Q15.5 3 15.5 4.5 V20.5 Q15.5 22 14 22 H2.5 Q1 22 1 20.5 V4.5 Q1 3 2.5 3Z" fill="#1a84d4"/><path d="M2.5 1 H13.5 Q15 1 15 2.5 V4 H1 V2.5 Q1 1 2.5 1Z" fill="#5aa8e4"/><path d="M4 9.5 H12 M4 12.2 H12 M4 14.9 H12" stroke="#bfe0fa" stroke-width="1.1"/></svg>
</body></html>
